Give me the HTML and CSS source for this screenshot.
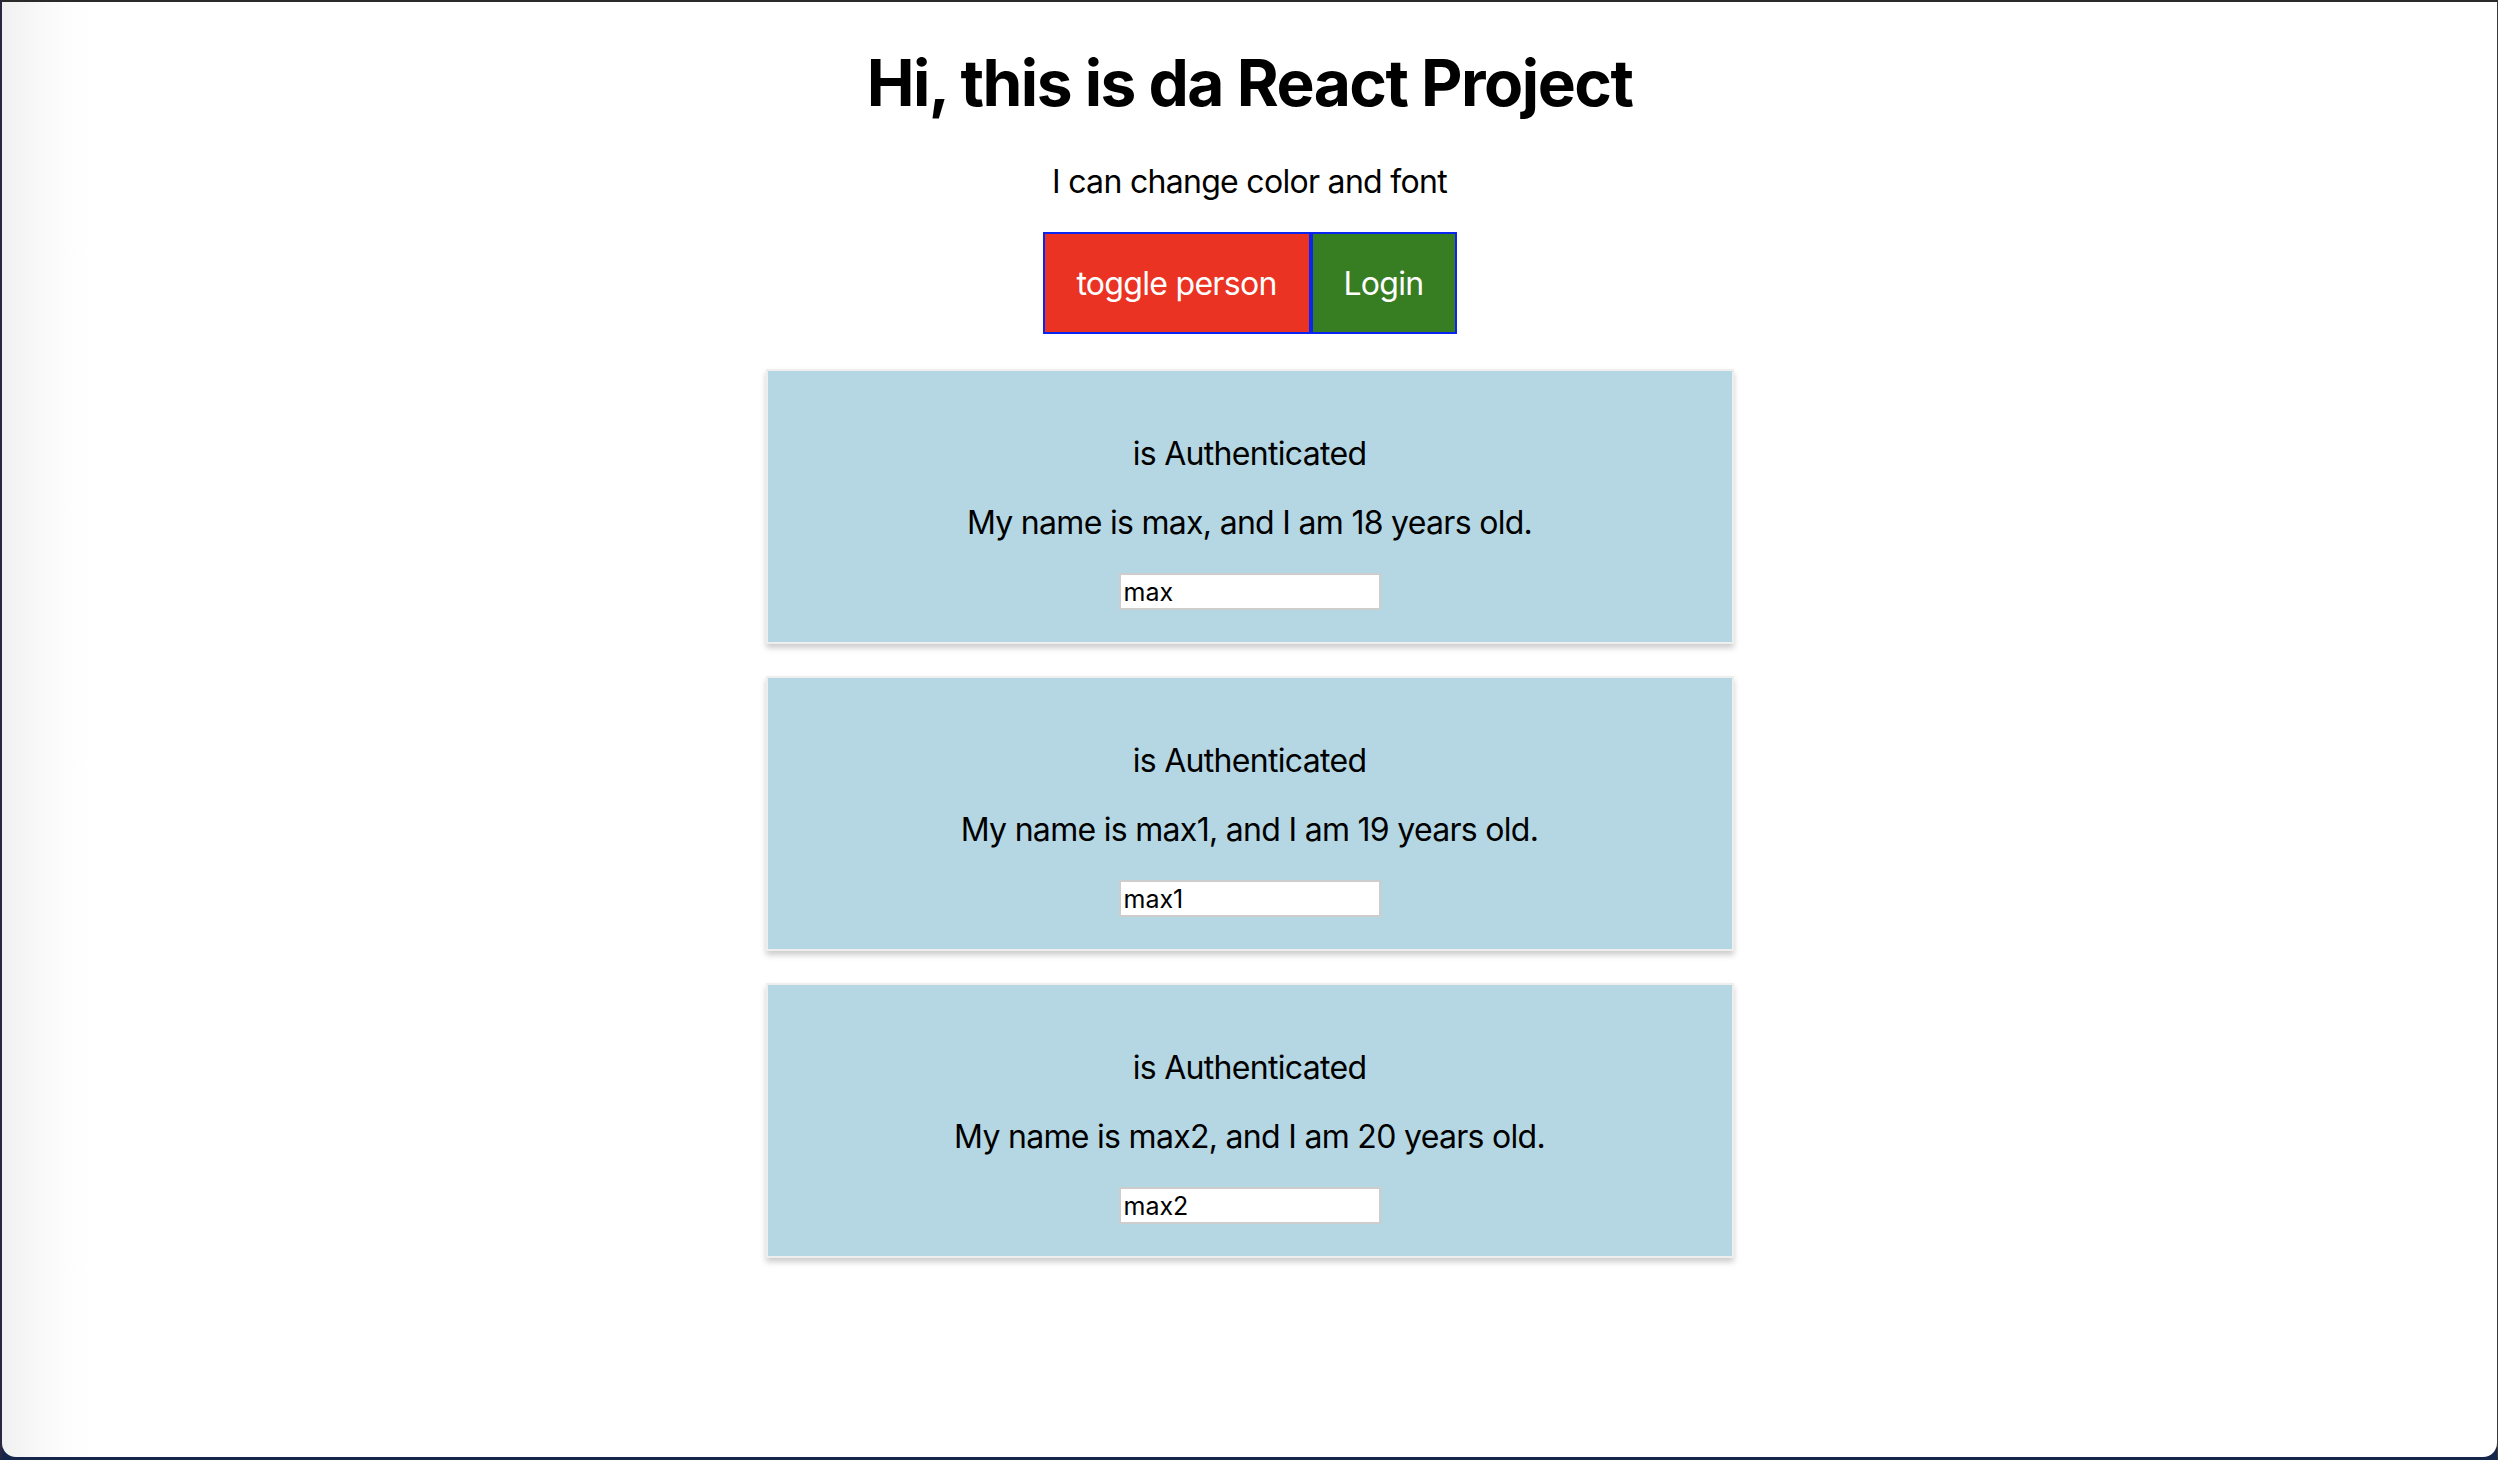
FILE: index.html
```html
<!DOCTYPE html>
<html lang="en">
<head>
<meta charset="utf-8">
<title>React App</title>
<link rel="stylesheet" href="styles.css">
</head>
<body>
<div class="window">
  <div class="page">
    <div class="app">
      <h1 class="title">Hi, this is da React Project</h1>
      <p class="subtitle">I can change color and font</p>
      <div class="actions">
        <button class="btn btn-toggle">toggle person</button><button class="btn btn-login">Login</button>
      </div>
      <div class="person">
        <p class="person-line">is Authenticated</p>
        <p class="person-line">My name is max, and I am 18 years old.</p>
        <input class="person-input" type="text" value="max">
      </div>
      <div class="person">
        <p class="person-line">is Authenticated</p>
        <p class="person-line">My name is max1, and I am 19 years old.</p>
        <input class="person-input" type="text" value="max1">
      </div>
      <div class="person">
        <p class="person-line">is Authenticated</p>
        <p class="person-line">My name is max2, and I am 20 years old.</p>
        <input class="person-input" type="text" value="max2">
      </div>
    </div>
  </div>
</div>
</body>
</html>
```

FILE: styles.css
```css
html, body {
  margin: 0;
  padding: 0;
}

body {
  width: 2498px;
  height: 1460px;
  background: #14264a;
  overflow: hidden;
  font-family: Inter, "Noto Sans", "Liberation Sans", sans-serif;
  color: #000;
}

.window {
  box-sizing: border-box;
  height: 1460px;
  border-top: 2px solid #2a2a2a;
  border-left: 2px solid #2c2440;
  border-right: 1px solid #3a3a3a;
  border-bottom: 3px solid #14264a;
  background: #14264a;
}

.page {
  height: 100%;
  background: linear-gradient(to right, #f0f0f0 0px, #f8f8f8 35px, #fdfdfd 65px, #ffffff 90px);
  border-radius: 0 0 14px 14px;
  overflow: hidden;
}

.app {
  text-align: center;
  padding-top: 42px;
}

.title {
  margin: 0;
  font-size: 64px;
  line-height: 78px;
  font-weight: 700;
  letter-spacing: -1.5px;
}

.subtitle {
  margin: 41px 0 31px;
  font-size: 32px;
  line-height: 38px;
  letter-spacing: -0.7px;
}

.actions {
  display: flex;
  justify-content: center;
  margin-bottom: 35px;
}

.btn {
  box-sizing: border-box;
  height: 102px;
  padding: 0;
  border: 2px solid #0a24f2;
  color: #fff;
  font-family: inherit;
  font-size: 32px;
  letter-spacing: -0.7px;
  white-space: nowrap;
  cursor: pointer;
}

.btn-toggle {
  background: #ea3323;
  width: 268px;
}

.btn-login {
  background: #377d22;
  width: 146px;
}

.person {
  box-sizing: border-box;
  width: 968px;
  margin: 0 auto 32px;
  padding: 32px;
  border: 2px solid #eeeeee;
  background: #b5d7e3;
  box-shadow: 0 4px 6px #cccccc;
}

.person-line {
  margin: 32px 0;
  font-size: 32px;
  line-height: 37px;
  letter-spacing: -0.7px;
}

.person-input {
  display: block;
  box-sizing: border-box;
  width: 262px;
  height: 37px;
  margin: 0 auto;
  padding: 0 3px;
  border: 2px solid #cdcdcd;
  background: #fff;
  font-family: Inter, "Noto Sans", sans-serif;
  font-size: 25px;
  color: #000;
}
```
